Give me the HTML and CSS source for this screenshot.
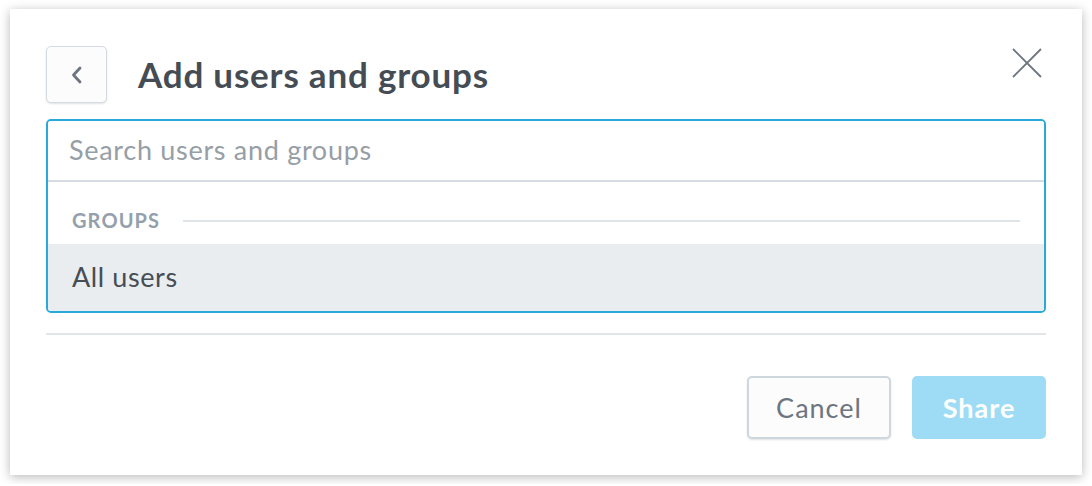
FILE: index.html
```html
<!DOCTYPE html>
<html lang="en">
<head>
  <meta charset="UTF-8">
  <title>Add users and groups</title>
  <link rel="stylesheet" href="styles.css">
</head>
<body>

  <!-- Share dialog -->
  <div class="dialog">
    <button class="close" aria-label="Close">
      <svg width="30" height="30" viewBox="0 0 30 30">
        <path d="M1 1 L29 29 M29 1 L1 29" stroke="#6d7680" stroke-width="1.8" fill="none"/>
      </svg>
    </button>

    <div class="header">
      <button class="back" aria-label="Back">
        <svg width="13" height="18" viewBox="0 0 13 18">
          <path d="M10 2 L3.5 9 L10 16" stroke="#6d7680" stroke-width="2.8" fill="none" stroke-linecap="round" stroke-linejoin="round"/>
        </svg>
      </button>
      <div class="title">Add users and groups</div>
    </div>

    <div class="picker">
      <input class="search" type="text" placeholder="Search users and groups">
      <div class="options">
        <div class="group-label"><span>Groups</span></div>
        <div class="option active">All users</div>
      </div>
    </div>

    <div class="divider"></div>

    <div class="footer">
      <button class="btn btn-cancel">Cancel</button>
      <button class="btn btn-share">Share</button>
    </div>
  </div>

</body>
</html>
```

FILE: styles.css
```css
* { box-sizing: border-box; }

html, body {
  margin: 0;
  padding: 0;
  background: #fff;
  font-family: 'Lato', 'Open Sans', sans-serif;
}

body {
  padding: 9px 10px;
}

.dialog {
  position: relative;
  width: 1072px;
  height: 466px;
  background: #fff;
  box-shadow: 0 2px 10px rgba(0, 0, 0, 0.28);
  padding: 37px 36px 36px 36px;
  display: flex;
  flex-direction: column;
}

.close {
  position: absolute;
  top: 39px;
  right: 40px;
  padding: 0;
  border: none;
  background: none;
  cursor: pointer;
  line-height: 0;
}

.header {
  display: flex;
  align-items: center;
  gap: 31px;
}

.back {
  width: 61px;
  height: 57px;
  border: 1px solid #d4dbe1;
  border-radius: 5px;
  background: #fcfcfd;
  box-shadow: 0 1px 2px rgba(0, 0, 0, 0.12);
  display: flex;
  align-items: center;
  justify-content: center;
  cursor: pointer;
  padding: 0;
}

.title {
  font-size: 35px;
  font-weight: bold;
  letter-spacing: 0.8px;
  color: #454c54;
  margin-top: -2px;
}

/* search + dropdown */
.picker {
  margin-top: 16px;
  border: 2px solid #27aad9;
  border-radius: 5px;
  overflow: hidden;
}

.search {
  display: block;
  width: 100%;
  height: 61px;
  border: none;
  border-bottom: 2px solid #d6dce1;
  outline: none;
  padding: 0 21px 2px;
  font-family: inherit;
  font-size: 27px;
  letter-spacing: 0.7px;
  color: #454c54;
}

.search::placeholder {
  color: #969ea6;
}

.group-label {
  display: flex;
  align-items: center;
  gap: 23px;
  height: 62px;
  padding: 13px 24px 0 24px;
  font-size: 20px;
  font-weight: bold;
  letter-spacing: 1.1px;
  text-transform: uppercase;
  color: #94a0ab;
}

.group-label::after {
  content: '';
  flex: 1;
  height: 2px;
  background: #dfe4e8;
  margin-top: 2px;
}

.option {
  height: 67px;
  padding: 0 24px 2px;
  display: flex;
  align-items: center;
  font-size: 27px;
  letter-spacing: 0.6px;
  color: #464d55;
}

.option.active {
  background: #e9edf0;
}

.divider {
  margin-top: 20px;
  height: 2px;
  background: #dfe5e9;
}

.footer {
  margin-top: auto;
  display: flex;
  justify-content: flex-end;
  gap: 21px;
}

.btn {
  height: 63px;
  border-radius: 5px;
  font-family: inherit;
  font-size: 27px;
  letter-spacing: 1px;
  cursor: pointer;
}

.btn-cancel {
  width: 144px;
  border: 2px solid #cfd7de;
  background: #fcfcfd;
  color: #6c7580;
  box-shadow: 0 1px 2px rgba(0, 0, 0, 0.12);
}

.btn-share {
  width: 134px;
  border: none;
  background: #9edcf5;
  color: #fff;
  font-weight: bold;
}
```
